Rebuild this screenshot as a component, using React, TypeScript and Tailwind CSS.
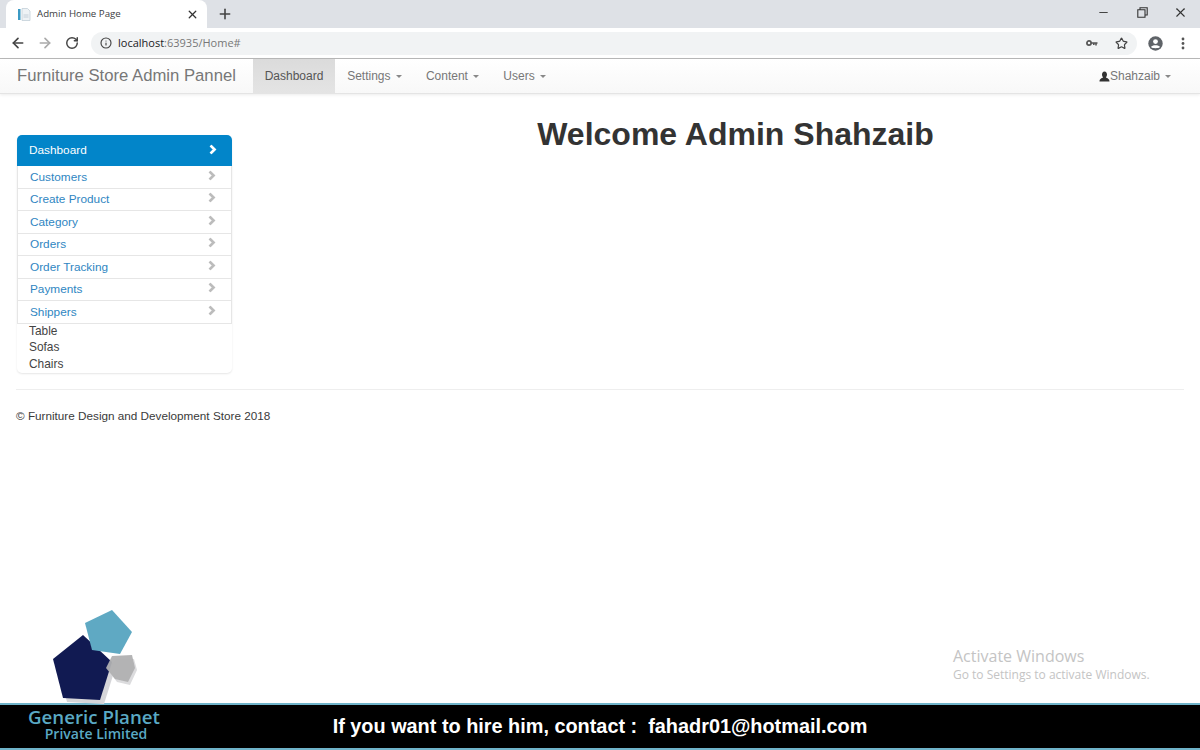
import React from "react";
import { ArrowLeft, ArrowRight, RotateCw, Info, Star, Plus, X, Minus } from "lucide-react";

const items = ["Customers", "Create Product", "Category", "Orders", "Order Tracking", "Payments", "Shippers"];
const nav = ["Settings", "Content", "Users"];

function Caret() {
  return <span className="ml-[5px] inline-block h-0 w-0 border-x-[3.5px] border-t-[3.5px] border-x-transparent border-t-[#888] align-middle" />;
}

function Chevron({ white }: { white?: boolean }) {
  return (
    <svg width="8" height="10" viewBox="0 0 8 10" className="shrink-0 -translate-y-[1.5px]">
      <path d="M1.5 1 L5.6 5 L1.5 9" fill="none" stroke={white ? "#ffffff" : "#bcbcbc"} strokeWidth="2.6" />
    </svg>
  );
}

function Logo() {
  return (
    <svg width="200" height="150" viewBox="0 0 200 150" className="absolute bottom-0 left-0">
      <polygon points="83,35 112,62 100,100 63,98 53,59" fill="#d6d6d9" transform="translate(4,4)" />
      <polygon points="116,59 134,59 137,70 130,85 117,82 108,70" fill="#dcdcde" />
      <polygon points="83,35 112,62 100,100 63,98 53,59" fill="#111a52" />
      <polygon points="112,10 132,32 120,54 92,50 85,23" fill="#5fa9c3" />
      <polygon points="112,56 132,55 135,68 128,82 115,79 106,68" fill="#b0b0b1" fillOpacity="0.95" />
      <text x="94" y="124" textAnchor="middle" fontFamily="'Open Sans', sans-serif" fontSize="18.7" fontWeight="600" fill="#5aa9c4">Generic Planet</text>
      <text x="96" y="139" textAnchor="middle" fontFamily="'Open Sans', sans-serif" fontSize="14" fontWeight="600" fill="#5aa9c4">Private Limited</text>
    </svg>
  );
}

export default function App() {
  return (
    <div className="relative flex h-[750px] w-[1200px] flex-col overflow-hidden bg-white font-['Liberation_Sans',Arial,sans-serif] text-[12px] text-[#333]">
      {/* Tab strip */}
      <div className="flex h-[28px] shrink-0 items-end bg-[#dee1e6] pl-[6px]">
        <div className="flex h-[28px] w-[201px] items-center rounded-t-[8px] bg-white pl-[11px] pr-[8px]">
          <svg width="15" height="15" viewBox="0 0 15 15" className="shrink-0">
            <rect x="1" y="2" width="2.5" height="11" fill="#3b9ac4" />
            <path d="M5 1.5 H10.5 L13 4 V13.5 H5 Z" fill="#eef2f5" stroke="#c3cfd8" strokeWidth="0.8" />
            <path d="M6.5 8 H11.5 M6.5 10 H11.5" stroke="#b9c7d2" strokeWidth="0.8" />
          </svg>
          <span className="ml-[5px] flex-1 font-['Open_Sans',sans-serif] text-[9.7px] text-[#3c4043]">Admin Home Page</span>
          <X size={13} color="#333" strokeWidth={2.4} />
        </div>
        <div className="flex h-[28px] w-[36px] items-center justify-center">
          <Plus size={16} color="#444" strokeWidth={2.4} />
        </div>
        <div className="flex-1" />
        <div className="flex h-[28px] items-center pb-[4px] pr-[12px]">
          <Minus size={13} color="#444" />
          <svg width="11" height="11" viewBox="0 0 11 11" className="ml-[27px]">
            <path d="M3 2.5 V0.8 H10.2 V8 H8 M0.8 2.8 H8 V10.2 H0.8 Z" fill="none" stroke="#333" strokeWidth="1.1" />
          </svg>
          <X size={15} color="#333" strokeWidth={1.7} className="ml-[25px]" />
        </div>
      </div>
      {/* Toolbar */}
      <div className="flex h-[31px] shrink-0 items-center border-b border-[#b9b9b9] bg-white pl-[10px] pr-[15px]">
        <ArrowLeft size={16} color="#444" strokeWidth={2.5} />
        <ArrowRight size={16} color="#aaa" strokeWidth={2.5} className="ml-[11px]" />
        <RotateCw size={14} color="#444" strokeWidth={2.5} className="ml-[12px]" />
        <div className="ml-[12px] flex h-[23px] flex-1 items-center rounded-full bg-[#f1f3f4] pl-[9px] pr-[9px]">
          <Info size={12} color="#444" strokeWidth={2.3} />
          <span className="ml-[6px] flex-1 font-['Open_Sans',sans-serif] text-[11px] text-[#202124]">
            localhost<span className="text-[#777]">:63935/Home#</span>
          </span>
          <svg width="12" height="8" viewBox="0 0 12 8">
            <circle cx="3" cy="4" r="2.1" fill="none" stroke="#555" strokeWidth="1.7" />
            <path d="M5 4 H11.5 M10 4 V6.5 M7.8 4 V6" stroke="#555" strokeWidth="1.6" fill="none" />
          </svg>
          <Star size={13} color="#444" strokeWidth={2.2} className="ml-[17px]" />
        </div>
        <svg width="15" height="15" viewBox="0 0 15 15" className="ml-[11px]">
          <circle cx="7.5" cy="7.5" r="7.2" fill="#5f6368" />
          <circle cx="7.5" cy="5.6" r="2.4" fill="#fff" />
          <path d="M3 11 C4 8.8 11 8.8 12 11 C11 12.6 4 12.6 3 11 Z" fill="#fff" />
        </svg>
        <svg width="4" height="13" viewBox="0 0 4 13" className="ml-[18px]">
          <circle cx="2" cy="2" r="1.4" fill="#555" />
          <circle cx="2" cy="6.5" r="1.4" fill="#555" />
          <circle cx="2" cy="11" r="1.4" fill="#555" />
        </svg>
      </div>
      {/* Navbar */}
      <div className="flex h-[35px] shrink-0 items-stretch border-b border-[#e4e4e4] bg-gradient-to-b from-white to-[#f8f8f8] pl-[17px] pr-[29px] shadow-[0_1px_3px_rgba(0,0,0,0.08)]">
        <div className="flex w-[236px] items-center text-[16.7px] text-[#777]">Furniture Store Admin Pannel</div>
        <div className="flex w-[82px] items-center justify-center bg-gradient-to-b from-[#dbdbdb] to-[#e4e4e4] text-[#555]">Dashboard</div>
        {nav.map((n) => (
          <div key={n} className="flex items-center px-[12.2px] text-[#777]">
            {n}
            <Caret />
          </div>
        ))}
        <div className="flex-1" />
        <div className="flex items-center text-[#777]">
          <svg width="11" height="11" viewBox="0 0 11 11">
            <path d="M5.5 0.5 C7.2 0.5 8 2 8 3.6 C8 5 7.3 6 6.9 6.6 C8.2 7.3 10.5 7.8 10.5 10.5 L0.5 10.5 C0.5 7.8 2.8 7.3 4.1 6.6 C3.7 6 3 5 3 3.6 C3 2 3.8 0.5 5.5 0.5 Z" fill="#333" />
          </svg>
          Shahzaib
          <Caret />
        </div>
      </div>
      {/* Content */}
      <div className="flex-1 px-[16px] pt-[41px]">
        <div className="flex items-start">
          <div className="ml-[1px] w-[215px] shrink-0 rounded-[5px] shadow-[0_1px_2px_rgba(0,0,0,0.1)]">
            <div className="flex h-[31px] items-center justify-between rounded-t-[5px] bg-[#0285c9] pl-[12px] pr-[15px] text-[11.8px] text-white">
              Dashboard
              <Chevron white />
            </div>
            {items.map((t) => (
              <div key={t} className="flex h-[22.5px] items-center justify-between border-x border-b border-[#e6e6e6] pl-[12px] pr-[15px] text-[11.8px] text-[#2f86c2]">
                <span className="translate-y-px">{t}</span>
                <Chevron />
              </div>
            ))}
            <div className="-mt-px flex flex-col px-[12px] text-[11.9px] leading-[16.7px] text-[#444]">
              <span>Table</span>
              <span>Sofas</span>
              <span>Chairs</span>
            </div>
          </div>
          <h1 className="-mt-[19px] flex-1 pl-[55px] text-center text-[32px] font-bold leading-[36px] text-[#333]">Welcome Admin Shahzaib</h1>
        </div>
        <div className="mt-[16px] border-t border-[#eeeeee]" />
        <p className="mt-[17px] text-[11.72px] text-[#3a3a3a]">© Furniture Design and Development Store 2018</p>
      </div>
      {/* Watermark */}
      <div className="absolute left-[953px] top-[646px] font-['Open_Sans',sans-serif] text-[#c4c4c4]">
        <div className="text-[16px] leading-[20px]">Activate Windows</div>
        <div className="text-[12px] leading-[17px]">Go to Settings to activate Windows.</div>
      </div>
      {/* Bottom bar */}
      <div className="flex h-[47px] shrink-0 items-center justify-center border-y-2 border-t-[#6fb3c9] border-b-[#6fb3c9] bg-black">
        <span className="text-[19.87px] font-bold text-white">If you want to hire him, contact :&nbsp; fahadr01@hotmail.com</span>
      </div>
      <Logo />
    </div>
  );
}
